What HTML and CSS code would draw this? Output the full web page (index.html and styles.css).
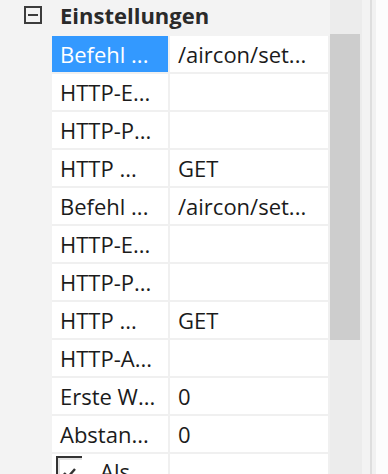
FILE: index.html
```html
<!DOCTYPE html>
<html lang="de">
<head>
<meta charset="utf-8">
<link rel="stylesheet" href="styles.css">
</head>
<body>
<div class="panel">
  <div class="main">
    <div class="header">
      <svg class="toggle" width="18" height="18" viewBox="0 0 18 18">
        <rect x="1" y="1" width="16" height="16" fill="none" stroke="#3c3c3c" stroke-width="2"/>
        <rect x="4" y="8" width="10" height="2" fill="#3c3c3c"/>
      </svg>
      <span class="title">Einstellungen</span>
    </div>
    <div class="grid">
      <div class="cell name selected">Befehl ...</div><div class="cell">/aircon/set...</div>
      <div class="cell name">HTTP-E...</div><div class="cell"></div>
      <div class="cell name">HTTP-P...</div><div class="cell"></div>
      <div class="cell name">HTTP ...</div><div class="cell">GET</div>
      <div class="cell name">Befehl ...</div><div class="cell">/aircon/set...</div>
      <div class="cell name">HTTP-E...</div><div class="cell"></div>
      <div class="cell name">HTTP-P...</div><div class="cell"></div>
      <div class="cell name">HTTP ...</div><div class="cell">GET</div>
      <div class="cell name">HTTP-A...</div><div class="cell"></div>
      <div class="cell name">Erste W...</div><div class="cell">0</div>
      <div class="cell name">Abstan...</div><div class="cell">0</div>
      <div class="cell name check-cell">
        <svg class="checkbox" width="26" height="26" viewBox="0 0 26 26">
          <rect x="1" y="1" width="26" height="26" fill="none" stroke="#333" stroke-width="2"/>
          <path d="M3 27 V3 H27" fill="none" stroke="#e2e2e2" stroke-width="2"/>
          <path d="M8 17 L12 21 L19 13" fill="none" stroke="#333" stroke-width="2.4"/>
        </svg>
        <span>Als ...</span>
      </div><div class="cell"></div>
    </div>
  </div>
  <div class="scrollbar"><div class="thumb"></div></div>
  <div class="strip"></div>
  <div class="sep"></div>
  <div class="strip2"></div>
  <div class="edge"></div>
</div>
</body>
</html>
```
FILE: styles.css
```css
html, body {
  margin: 0;
  padding: 0;
  background: #f3f3f3;
  overflow: hidden;
}
.panel {
  display: flex;
  width: 388px;
  height: 474px;
  font-family: "Open Sans", "Noto Sans", sans-serif;
  font-size: 22px;
  color: #1b1b1b;
}
.main {
  width: 330px;
  flex: none;
}
.header {
  height: 36px;
  display: flex;
  align-items: center;
}
.toggle {
  margin-left: 24px;
  margin-top: -6px;
  flex: none;
}
.title {
  margin-left: 18px;
  margin-top: -6px;
  font-weight: 700;
  color: #2a2a2a;
}
.grid {
  margin-left: 52px;
  display: grid;
  grid-template-columns: 116px 158px;
  grid-auto-rows: 36px;
  gap: 2px;
  padding-right: 2px;
  background: #f0f0f0;
}
.cell {
  background: #fff;
  display: flex;
  align-items: center;
  padding-left: 8px;
  white-space: nowrap;
  overflow: hidden;
}
.selected {
  background: #3399ff;
  color: #fff;
}
.check-cell {
  padding-left: 4px;
  align-items: flex-start;
  padding-top: 2px;
  gap: 18px;
}
.check-cell span {
  margin-top: 0;
}
.scrollbar {
  width: 32px;
  flex: none;
  background: #ececec;
}
.thumb {
  margin-top: 34px;
  width: 30px;
  height: 306px;
  background: #cdcdcd;
}
.strip {
  width: 8px;
  flex: none;
  background: #f3f3f3;
}
.sep {
  width: 2px;
  flex: none;
  background: #dedede;
}
.strip2 {
  width: 4px;
  flex: none;
  background: #f1f1f1;
}
.edge {
  flex: 1;
  background: #fcfcfc;
}
```
